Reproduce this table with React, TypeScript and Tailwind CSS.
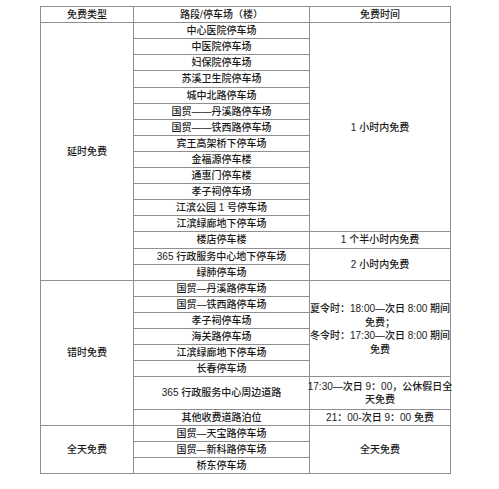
import React from "react";

const C = "bg-white flex items-center justify-center text-center whitespace-nowrap";

export default function App() {
  const yanshi = [
    "中心医院停车场",
    "中医院停车场",
    "妇保院停车场",
    "苏溪卫生院停车场",
    "城中北路停车场",
    "国贸——丹溪路停车场",
    "国贸——铁西路停车场",
    "宾王高架桥下停车场",
    "金福源停车楼",
    "通惠门停车楼",
    "孝子祠停车场",
    "江滨公园 1 号停车场",
    "江滨绿廊地下停车场",
  ];
  const cuoshi = [
    "国贸—丹溪路停车场",
    "国贸—铁西路停车场",
    "孝子祠停车场",
    "海关路停车场",
    "江滨绿廊地下停车场",
    "长春停车场",
  ];
  return (
    <div
      className="w-[499px] h-[489px] bg-white pt-[6px] pl-[40px] text-[10px] font-medium text-[#1a1a1a]"
      style={{ fontFamily: '"Liberation Sans", "Noto Sans CJK SC", sans-serif' }}
    >
      <div className="grid w-[411px] h-[468px] grid-cols-[92px_175px_140px] grid-rows-[repeat(29,minmax(0,1fr))] gap-px p-px bg-[#8f8f8f]">
        <div className={`${C} col-start-1`}>免费类型</div>
        <div className={`${C} col-start-2`}>路段/停车场（楼）</div>
        <div className={`${C} col-start-3`}>免费时间</div>

        <div className={`${C} col-start-1 row-span-16`}>延时免费</div>
        {yanshi.map((t, i) => (
          <React.Fragment key={t + i}>
            <div className={`${C} col-start-2`}>{t}</div>
            {i === 0 && (
              <div className={`${C} col-start-3 row-span-13`}>1 小时内免费</div>
            )}
          </React.Fragment>
        ))}
        <div className={`${C} col-start-2`}>楼店停车楼</div>
        <div className={`${C} col-start-3`}>1 个半小时内免费</div>
        <div className={`${C} col-start-2`}>365 行政服务中心地下停车场</div>
        <div className={`${C} col-start-3 row-span-2`}>2 小时内免费</div>
        <div className={`${C} col-start-2`}>绿肺停车场</div>

        <div className={`${C} col-start-1 row-span-9`}>错时免费</div>
        {cuoshi.map((t, i) => (
          <React.Fragment key={t + i}>
            <div className={`${C} col-start-2`}>{t}</div>
            {i === 0 && (
              <div className={`${C} col-start-3 row-span-6 flex-col leading-[13.5px] pt-[1px]`}>
                <span>夏令时：18:00—次日 8:00 期间</span>
                <span>免费；</span>
                <span>冬令时：17:30—次日 8:00 期间</span>
                <span>免费</span>
              </div>
            )}
          </React.Fragment>
        ))}
        <div className={`${C} col-start-2 row-span-2`}>365 行政服务中心周边道路</div>
        <div className={`${C} col-start-3 row-span-2 flex-col leading-[13px]`}>
          <span>17:30—次日 9：00，公休假日全</span>
          <span>天免费</span>
        </div>
        <div className={`${C} col-start-2`}>其他收费道路泊位</div>
        <div className={`${C} col-start-3`}>21：00-次日 9：00 免费</div>

        <div className={`${C} col-start-1 row-span-3`}>全天免费</div>
        <div className={`${C} col-start-2`}>国贸—天宝路停车场</div>
        <div className={`${C} col-start-3 row-span-3`}>全天免费</div>
        <div className={`${C} col-start-2`}>国贸—新科路停车场</div>
        <div className={`${C} col-start-2`}>桥东停车场</div>
      </div>
    </div>
  );
}
